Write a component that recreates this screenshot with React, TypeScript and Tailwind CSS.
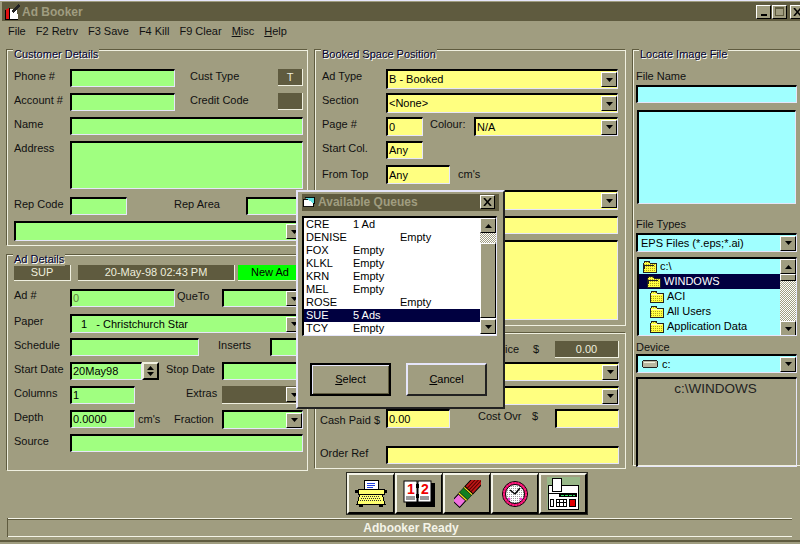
import React from 'react';

const raised = 'border border-t-white border-l-white border-r-black border-b-black';
const sunken = 'border-t-2 border-l-2 border-r border-b border-t-black border-l-black border-r-[#e6e6fa] border-b-[#e6e6fa]';
const green = 'bg-[#a0ff80]';
const yellow = 'bg-[#ffff80]';
const cyan = 'bg-[#a0ffff]';
const dither = 'bg-[repeating-conic-gradient(#ffffff_0_25%,#a09d80_0_50%)] bg-[length:2px_2px]';

function Group({ title, className, children }: { title: string; className: string; children: React.ReactNode }) {
  return (
    <div className={`relative box-border border border-[#f0f0e0] shadow-[-1px_-1px_0_#5f5b3f] ${className}`}>
      {title && (
        <span className="absolute -top-[4px] left-[5px] bg-[#a09d80] px-[1px] text-[11px] leading-[14px] text-[#000030] [text-shadow:1px_1px_0_#ffffff]">
          {title}
        </span>
      )}
      {children}
    </div>
  );
}

function Label({ className = '', children }: { className?: string; children?: React.ReactNode }) {
  return <span className={`shrink-0 whitespace-nowrap text-[11px] leading-[14px] text-[#111] ${className}`}>{children}</span>;
}

function Field({ className = '', children }: { className?: string; children?: React.ReactNode }) {
  return (
    <div className={`box-border flex shrink-0 items-center overflow-hidden whitespace-nowrap pl-[1px] text-[11px] text-black ${sunken} ${className}`}>
      {children}
    </div>
  );
}

function Arrow({ up = false }: { up?: boolean }) {
  return (
    <svg width="7" height="4" viewBox="0 0 7 4" className={up ? 'rotate-180' : ''}>
      <polygon points="0,0 7,0 3.5,4" fill="#000" />
    </svg>
  );
}

function DropBtn() {
  return (
    <div className={`ml-auto box-border flex h-[15px] w-[16px] shrink-0 items-center justify-center bg-[#a09d80] ${raised}`}>
      <Arrow />
    </div>
  );
}

function Combo({ className = '', children }: { className?: string; children?: React.ReactNode }) {
  return (
    <Field className={className}>
      <span className="min-w-0 flex-1 overflow-hidden">{children}</span>
      <DropBtn />
    </Field>
  );
}

function DarkBox({ className = '', children }: { className?: string; children?: React.ReactNode }) {
  return (
    <div className={`box-border flex shrink-0 items-center justify-center border-r border-b border-[#f0f0e0] bg-[#5f5b3f] text-[11px] text-[#eeeedd] ${className}`}>
      {children}
    </div>
  );
}

function AppIcon() {
  return (
    <svg width="17" height="16" viewBox="0 0 17 16" className="shrink-0" shapeRendering="crispEdges">
      <polygon points="1,6 5,4 5,15 1,15" fill="#e01010" />
      <polygon points="5,5 13,5 14,15 5,15" fill="#ffffff" />
      <polygon points="7,7 14,0 16,2 9,9" fill="#222" />
      <path d="M1 6V15H14M5 4V15" fill="none" stroke="#000" />
    </svg>
  );
}

function FolderIcon({ open = false }: { open?: boolean }) {
  return (
    <svg width="15" height="13" viewBox="0 0 15 13" className="shrink-0" shapeRendering="crispEdges">
      <defs>
        <pattern id="folderDots" width="2" height="2" patternUnits="userSpaceOnUse">
          <rect width="2" height="2" fill="#ffff40" />
          <rect width="1" height="1" fill="#b0a020" />
        </pattern>
      </defs>
      <path d="M1 3V12H14V3H8L7 1H3L2 3Z" fill="url(#folderDots)" stroke="#222" />
      {open ? <path d="M1 5H12M1 12L3 5" stroke="#222" fill="none" /> : <path d="M2 4H13" stroke="#fff8c0" />}
    </svg>
  );
}

function Typewriter() {
  return (
    <svg width="32" height="29" viewBox="0 0 32 29" shapeRendering="crispEdges">
      <rect x="9" y="1" width="14" height="11" fill="#fff" stroke="#000" />
      <path d="M12 4H20M12 6H20M12 8H18" stroke="#2040e0" />
      <rect x="3" y="10" width="26" height="5" fill="#ffff70" stroke="#000" />
      <rect x="0" y="11" width="3" height="3" fill="#000" />
      <rect x="29" y="11" width="3" height="3" fill="#000" />
      <polygon points="5,15 27,15 30,25 2,25" fill="#ffff70" stroke="#000" />
      <path d="M7 17H25M6 19H26M5 21H27" stroke="#333" strokeDasharray="1 1" />
      <rect x="4" y="26" width="4" height="2" fill="#000" />
      <rect x="24" y="26" width="4" height="2" fill="#000" />
    </svg>
  );
}

function Calendar() {
  return (
    <svg width="32" height="27" viewBox="0 0 32 27">
      <rect x="3" y="3" width="29" height="24" fill="#000" />
      <rect x="1" y="1" width="13" height="21" fill="#fff" stroke="#000" />
      <rect x="15" y="1" width="13" height="21" fill="#fff" stroke="#000" />
      <text x="4" y="14" fontSize="14" fontWeight="700" fontFamily="Liberation Sans" fill="#f00000">1</text>
      <text x="18" y="14" fontSize="14" fontWeight="700" fontFamily="Liberation Sans" fill="#f00000">2</text>
      <path d="M3 17H12M3 19H12M17 17H26M17 19H26" stroke="#333" />
      <rect x="13" y="4" width="3" height="4" fill="#000" />
      <rect x="13" y="14" width="3" height="4" fill="#000" />
    </svg>
  );
}

function Eraser() {
  return (
    <svg width="27" height="28" viewBox="0 0 27 28">
      <g transform="translate(2,24) rotate(-47)">
        <rect x="0" y="-5" width="9" height="10" fill="#f070e0" stroke="#000" />
        <rect x="9" y="-5.5" width="2" height="11" fill="#f0e020" stroke="#000" strokeWidth="0.5" />
        <rect x="11" y="-5.5" width="6" height="11" fill="#108020" stroke="#000" strokeWidth="0.5" />
        <rect x="17" y="-5.5" width="2" height="11" fill="#f0e020" stroke="#000" strokeWidth="0.5" />
        <rect x="19" y="-5.5" width="17" height="11" fill="#c01818" stroke="#000" />
        <path d="M19 -2.5H36M19 0H36M19 2.5H36" stroke="#500" />
      </g>
    </svg>
  );
}

function Clock() {
  return (
    <svg width="28" height="28" viewBox="0 0 28 28">
      <defs>
        <pattern id="clockDots" width="2" height="2" patternUnits="userSpaceOnUse">
          <rect width="2" height="2" fill="#fff" />
          <rect width="1" height="1" fill="#999" />
        </pattern>
      </defs>
      <circle cx="14" cy="14" r="12.5" fill="#e00060" stroke="#000" />
      <circle cx="14" cy="14" r="11" fill="none" stroke="#ff2080" strokeDasharray="2 1" strokeWidth="2" />
      <circle cx="14" cy="14" r="9.5" fill="url(#clockDots)" stroke="#000" />
      <path d="M14 14L19 8M14 14L9 10" stroke="#000" strokeWidth="1.5" />
      <circle cx="8" cy="19" r="1.5" fill="#f040d0" />
      <circle cx="20" cy="19" r="1.5" fill="#f040d0" />
    </svg>
  );
}

function Fax() {
  return (
    <svg width="33" height="33" viewBox="0 0 33 33" shapeRendering="crispEdges">
      <rect width="33" height="33" fill="#98b888" />
      <rect x="1" y="8" width="30" height="24" fill="#fff" stroke="#000" />
      <rect x="5" y="1" width="9" height="13" fill="#fff" stroke="#000" />
      <rect x="2" y="16" width="28" height="1" fill="#000" />
      <rect x="12" y="16" width="18" height="4" fill="#000" />
      <path d="M14 18H28" stroke="#30e060" strokeDasharray="3 1" />
      <rect x="3" y="22" width="3" height="7" fill="#fff" stroke="#000" />
      <rect x="9" y="22" width="10" height="7" fill="#fff" stroke="#000" />
      <path d="M12 22V29M16 22V29M9 25H19" stroke="#000" />
      <rect x="22" y="22" width="6" height="7" fill="#e00000" stroke="#000" />
    </svg>
  );
}

function ToolButton({ children }: { children: React.ReactNode }) {
  return (
    <div className="box-border flex h-[41px] w-[48px] items-center justify-center border-2 border-t-[#f4f4e8] border-l-[#f4f4e8] border-r-black border-b-black bg-[#a09d80] outline outline-1 -outline-offset-0 outline-[#2a2a20]">
      {children}
    </div>
  );
}

const queues = [
  ['CRE', '1 Ad', ''],
  ['DENISE', '', 'Empty'],
  ['FOX', 'Empty', ''],
  ['KLKL', 'Empty', ''],
  ['KRN', 'Empty', ''],
  ['MEL', 'Empty', ''],
  ['ROSE', '', 'Empty'],
  ['SUE', '5 Ads', ''],
  ['TCY', 'Empty', ''],
];

function QueueDialog() {
  return (
    <div className="absolute left-[296px] top-[189px] box-border flex h-[219px] w-[209px] flex-col border-2 border-t-[#e6e6fa] border-l-[#e6e6fa] border-r-[#222] border-b-[#222] bg-[#a09d80] px-[4px] pt-[2px]">
      <div className="flex h-[17px] shrink-0 items-center bg-[#5f5b3f] pb-[1px] pl-[1px] pr-[4px]">
        <svg width="12" height="12" viewBox="0 0 13 12" className="shrink-0" shapeRendering="crispEdges">
          <path d="M1 3V11H11V3Z" fill="#fff" stroke="#000" />
          <path d="M2 1H12V8" fill="#60e0e0" stroke="#000" />
        </svg>
        <span className="ml-[3px] text-[12px] font-bold text-[#a09d80]">Available Queues</span>
        <div className={`ml-auto box-border flex h-[14px] w-[15px] items-center justify-center bg-[#a09d80] ${raised}`}>
          <svg width="9" height="8" viewBox="0 0 9 8">
            <path d="M1 0L8 8M8 0L1 8" stroke="#000" strokeWidth="1.6" />
          </svg>
        </div>
      </div>
      <div className={`mt-[5px] box-border flex h-[120px] w-[195px] shrink-0 bg-white ${sunken}`}>
        <div className="flex w-[176px] shrink-0 flex-col">
          {queues.map(([name, a, b]) => (
            <div
              key={name}
              className={`flex h-[13px] shrink-0 items-center text-[11px] ${name === 'SUE' ? 'bg-[#000040] text-white' : 'text-black'}`}
            >
              <span className="w-[49px] shrink-0 pl-[2px]">{name}</span>
              <span className="w-[47px] shrink-0">{a}</span>
              <span>{b}</span>
            </div>
          ))}
        </div>
        <div className="flex w-[16px] shrink-0 flex-col">
          <div className={`box-border flex h-[15px] shrink-0 items-center justify-center bg-[#a09d80] ${raised}`}>
            <Arrow up />
          </div>
          <div className={`h-[10px] shrink-0 ${dither}`} />
          <div className={`box-border h-[75px] shrink-0 bg-[#a09d80] ${raised}`} />
          <div className={`box-border mt-[1px] flex h-[15px] shrink-0 items-center justify-center bg-[#a09d80] ${raised}`}>
            <Arrow />
          </div>
        </div>
      </div>
      <div className="mt-[27px] flex gap-[15px] pl-[8px]">
        <div className="box-border flex h-[33px] w-[81px] items-center justify-center border-2 border-black bg-[#a09d80] text-[11px] text-black shadow-[inset_1px_1px_0_#e6e6fa,inset_-1px_-1px_0_#5f5b3f]">
          <span><u>S</u>elect</span>
        </div>
        <div className="box-border flex h-[33px] w-[81px] items-center justify-center border-2 border-t-[#e6e6fa] border-l-[#e6e6fa] border-r-[#222] border-b-[#222] bg-[#a09d80] text-[11px] text-black">
          <span><u>C</u>ancel</span>
        </div>
      </div>
    </div>
  );
}

export default function App() {
  return (
    <div className="relative flex h-[544px] w-[800px] flex-col overflow-hidden border-t border-[#e6e6fa] bg-[#a09d80] font-['Liberation_Sans',Arial,sans-serif]">
      {/* title bar */}
      <div className="ml-[2px] mt-[1px] flex h-[19px] shrink-0 items-center bg-[#5f5b3f] pl-[2px]">
        <AppIcon />
        <span className="ml-[1px] text-[12px] font-bold text-[#a09d80]">Ad Booker</span>
        <div className="ml-auto flex h-[14px] items-center">
          <div className={`box-border flex h-[14px] w-[15px] items-end justify-center bg-[#a09d80] pb-[2px] ${raised}`}>
            <div className="h-[2px] w-[6px] bg-black" />
          </div>
          <div className={`box-border ml-[1px] flex h-[14px] w-[15px] items-center justify-center bg-[#a09d80] ${raised}`}>
            <div className="box-border h-[9px] w-[9px] border border-t-2 border-[#5f5b3f]" />
          </div>
          <div className={`box-border -mr-[5px] ml-[3px] flex h-[14px] w-[15px] items-center justify-center bg-[#a09d80] ${raised}`}>
            <svg width="9" height="8" viewBox="0 0 9 8">
              <path d="M1 0L8 8M8 0L1 8" stroke="#000" strokeWidth="1.6" />
            </svg>
          </div>
        </div>
      </div>

      {/* menu */}
      <div className="flex h-[29px] shrink-0 gap-[10px] pl-[8px] pt-[3px] text-[11px] leading-[14px] text-[#111]">
        <span>File</span>
        <span>F2 Retrv</span>
        <span>F3 Save</span>
        <span>F4 Kill</span>
        <span>F9 Clear</span>
        <span><u>M</u>isc</span>
        <span><u>H</u>elp</span>
      </div>

      <div className="flex h-[421px] shrink-0 pl-[7px]">
        {/* left column */}
        <div className="flex w-[301px] shrink-0 flex-col gap-[9px]">
          <Group title="Customer Details" className="h-[196px] pl-[6px] pt-[18px]">
            <div className="flex flex-col gap-[6px]">
              <div className="flex h-[18px]">
                <Label className="w-[56px]">Phone #</Label>
                <Field className={`w-[105px] ${green}`} />
                <Label className="ml-[15px] w-[88px]">Cust Type</Label>
                <DarkBox className="h-[17px] w-[25px]">T</DarkBox>
              </div>
              <div className="flex h-[18px]">
                <Label className="w-[56px]">Account #</Label>
                <Field className={`w-[105px] ${green}`} />
                <Label className="ml-[15px] w-[88px]">Credit Code</Label>
                <DarkBox className="h-[17px] w-[25px]" />
              </div>
              <div className="flex h-[18px]">
                <Label className="w-[56px]">Name</Label>
                <Field className={`w-[233px] ${green}`} />
              </div>
              <div className="flex h-[48px]">
                <Label className="w-[56px]">Address</Label>
                <Field className={`w-[233px] ${green}`} />
              </div>
              <div className="mt-[2px] flex h-[18px]">
                <Label className="w-[56px]">Rep Code</Label>
                <Field className={`w-[57px] ${green}`} />
                <Label className="ml-[47px] w-[72px]">Rep Area</Label>
                <Field className={`w-[57px] ${green}`} />
              </div>
              <Combo className={`h-[20px] w-[289px] ${green}`} />
            </div>
          </Group>

          <Group title="Ad Details" className="h-[216px] pl-[6px] pt-[9px]">
            <div className="flex flex-col gap-[6px]">
              <div className="mb-[2px] flex h-[16px] gap-[7px]">
                <DarkBox className="w-[57px]">SUP</DarkBox>
                <DarkBox className="w-[157px]">20-May-98 02:43 PM</DarkBox>
                <DarkBox className="-ml-[4px] w-[65px] !bg-[#00ff00] !text-black">New Ad</DarkBox>
              </div>
              <div className="flex h-[18px]">
                <Label className="w-[56px] -mt-[1px]">Ad #</Label>
                <Field className={`w-[105px] !text-[#608040] ${green}`}>0</Field>
                <Label className="ml-[2px] w-[45px]">QueTo</Label>
                <Combo className={`w-[81px] ${green}`} />
              </div>
              <div className="mt-[1px] flex h-[19px]">
                <Label className="w-[56px]">Paper</Label>
                <Combo className={`w-[233px] ${green}`}>
                  <span className="pl-[8px]">1&nbsp;&nbsp; - Christchurch Star</span>
                </Combo>
              </div>
              <div className="-mt-[1px] flex h-[18px]">
                <Label className="w-[56px]">Schedule</Label>
                <Field className={`w-[129px] ${green}`} />
                <Label className="ml-[19px] w-[52px]">Inserts</Label>
                <Field className={`w-[33px] ${green}`} />
              </div>
              <div className="flex h-[18px]">
                <Label className="w-[56px]">Start Date</Label>
                <Field className={`w-[72px] ${green}`}>20May98</Field>
                <div className="box-border flex w-[17px] shrink-0 flex-col items-center justify-center gap-[2px] border-2 border-t-[#f0f0e0] border-l-[#f0f0e0] border-r-black border-b-black bg-[#a09d80]">
                  <Arrow up />
                  <Arrow />
                </div>
                <Label className="ml-[7px] w-[56px]">Stop Date</Label>
                <Field className={`w-[81px] ${green}`} />
              </div>
              <div className="flex h-[18px]">
                <Label className="w-[56px]">Columns</Label>
                <Field className={`w-[65px] ${green}`}>1</Field>
                <Label className="ml-[51px] w-[36px]">Extras</Label>
                <div className="box-border flex w-[81px] shrink-0 items-center justify-end border-r border-b border-[#f0f0e0] bg-[#5f5b3f]">
                  <DropBtn />
                </div>
              </div>
              <div className="flex h-[18px]">
                <Label className="w-[56px]">Depth</Label>
                <Field className={`w-[65px] ${green}`}>0.0000</Field>
                <Label className="ml-[3px] w-[36px] pt-[2px]">cm's</Label>
                <Label className="w-[48px] pt-[2px]">Fraction</Label>
                <Combo className={`h-[19px] w-[81px] ${green}`} />
              </div>
              <div className="flex h-[18px]">
                <Label className="w-[56px]">Source</Label>
                <Field className={`w-[233px] ${green}`} />
              </div>
            </div>
          </Group>
        </div>

        {/* middle column */}
        <div className="ml-[7px] flex w-[311px] shrink-0 flex-col gap-[7px]">
          <Group title="Booked Space Position" className="h-[276px] pl-[6px] pt-[18px]">
            <div className="flex flex-col gap-[4px]">
              <div className="flex h-[20px]">
                <Label className="w-[64px]">Ad Type</Label>
                <Combo className={`w-[232px] ${yellow}`}>B - Booked</Combo>
              </div>
              <div className="flex h-[20px]">
                <Label className="w-[64px]">Section</Label>
                <Combo className={`w-[232px] ${yellow}`}>&lt;None&gt;</Combo>
              </div>
              <div className="flex h-[19px]">
                <Label className="w-[64px]">Page #</Label>
                <Field className={`w-[37px] ${yellow}`}>0</Field>
                <Label className="ml-[7px] w-[44px]">Colour:</Label>
                <Combo className={`w-[144px] ${yellow}`}>N/A</Combo>
              </div>
              <div className="mt-[1px] flex h-[18px]">
                <Label className="w-[64px]">Start Col.</Label>
                <Field className={`w-[37px] ${yellow}`}>Any</Field>
              </div>
              <div className="mt-[2px] flex h-[19px]">
                <Label className="w-[64px] pt-[2px]">From Top</Label>
                <Field className={`w-[64px] ${yellow}`}>Any</Field>
                <Label className="ml-[8px] pt-[2px]">cm's</Label>
              </div>
              <div className="mt-[2px] flex h-[20px]">
                <Label className="w-[64px]" />
                <Combo className={`w-[232px] ${yellow}`} />
              </div>
              <div className="mt-[2px] flex h-[18px]">
                <Label className="w-[64px]" />
                <Field className={`w-[232px] ${yellow}`} />
              </div>
              <div className="mt-[2px] flex h-[80px]">
                <Label className="w-[64px]" />
                <Field className={`w-[232px] ${yellow}`} />
              </div>
            </div>
          </Group>

          <Group title="" className="h-[136px] pl-[4px] pt-[7px]">
            <div className="flex flex-col">
              <div className="flex h-[17px] pl-[174px]">
                <Label className="w-[39px] pt-[1px]">Price</Label>
                <Label className="w-[22px] pt-[1px]">$</Label>
                <DarkBox className="w-[64px] border-0">0.00</DarkBox>
              </div>
              <div className="mt-[4px] flex h-[19px] pl-[66px]">
                <Combo className={`w-[233px] ${yellow}`} />
              </div>
              <div className="mt-[5px] flex h-[19px] pl-[66px]">
                <Combo className={`w-[233px] ${yellow}`} />
              </div>
              <div className="mt-[4px] flex h-[19px]">
                <Label className="w-[54px] pt-[4px]">Cash Paid</Label>
                <Label className="w-[12px] pt-[4px]">$</Label>
                <Field className={`w-[64px] ${yellow}`}>0.00</Field>
                <Label className="ml-[28px] w-[54px]">Cost Ovr</Label>
                <Label className="w-[23px]">$</Label>
                <Field className={`w-[64px] ${yellow}`} />
              </div>
              <div className="mt-[18px] flex h-[18px]">
                <Label className="w-[66px]">Order Ref</Label>
                <Field className={`w-[233px] ${yellow}`} />
              </div>
            </div>
          </Group>
        </div>

        {/* right column */}
        <div className="ml-[7px] w-[175px] shrink-0">
          <Group title="Locate Image File" className="h-[416px] w-[175px] pl-[2px]">
            <div className="flex flex-col">
              <Label className="mt-[18px]">File Name</Label>
              <Field className={`mt-[2px] h-[18px] w-[161px] ${cyan}`} />
              <Field className={`ml-[1px] mt-[7px] h-[94px] w-[159px] ${cyan}`} />
              <Label className="mt-[13px]">File Types</Label>
              <Combo className={`mt-[2px] h-[19px] w-[161px] ${cyan}`}>
                <span className="pl-[2px]">EPS Files (*.eps;*.ai)</span>
              </Combo>
              <div className={`ml-[1px] mt-[5px] box-border flex h-[79px] w-[160px] shrink-0 overflow-hidden ${cyan} ${sunken}`}>
                <div className="flex w-[141px] shrink-0 flex-col text-[11px] text-black">
                  <div className="flex h-[15px] shrink-0 items-center gap-[3px] pl-[3px]"><FolderIcon open />c:\</div>
                  <div className="flex h-[15px] shrink-0 items-center gap-[3px] bg-[#000040] pl-[7px] text-white"><FolderIcon open />WINDOWS</div>
                  <div className="flex h-[15px] shrink-0 items-center gap-[3px] pl-[10px]"><FolderIcon />ACI</div>
                  <div className="flex h-[15px] shrink-0 items-center gap-[3px] pl-[10px]"><FolderIcon />All Users</div>
                  <div className="flex h-[15px] shrink-0 items-center gap-[3px] pl-[10px]"><FolderIcon />Application Data</div>
                  <div className="flex h-[15px] shrink-0 items-center pl-[10px]"><FolderIcon /></div>
                </div>
                <div className="flex w-[16px] shrink-0 flex-col">
                  <div className={`box-border flex h-[15px] shrink-0 items-center justify-center bg-[#a09d80] ${raised}`}>
                    <Arrow up />
                  </div>
                  <div className={`box-border h-[7px] shrink-0 bg-[#a09d80] ${raised}`} />
                  <div className={`h-[40px] shrink-0 ${dither}`} />
                  <div className={`box-border flex h-[15px] shrink-0 items-center justify-center bg-[#a09d80] ${raised}`}>
                    <Arrow />
                  </div>
                </div>
              </div>
              <Label className="mt-[4px]">Device</Label>
              <Combo className={`h-[19px] w-[161px] ${cyan}`}>
                <span className="flex items-center gap-[4px] pl-[3px]">
                  <svg width="16" height="10" viewBox="0 0 16 10" className="shrink-0" shapeRendering="crispEdges">
                    <rect x="0.5" y="1.5" width="15" height="7" rx="2" fill="#b8b8a0" stroke="#222" />
                    <path d="M2 3H13" stroke="#f0f0e0" />
                  </svg>
                  c:
                </span>
              </Combo>
              <Field className="mt-[4px] h-[90px] w-[161px] !items-start justify-center pr-[4px] !text-[13.5px] !text-[#222]">
                c:\WINDOWS
              </Field>
            </div>
          </Group>
        </div>
      </div>

      {/* toolbar */}
      <div className="ml-[347px] mt-[2px] flex h-[41px] shrink-0 gap-0">
        <ToolButton><Typewriter /></ToolButton>
        <ToolButton><Calendar /></ToolButton>
        <ToolButton><Eraser /></ToolButton>
        <ToolButton><Clock /></ToolButton>
        <ToolButton><Fax /></ToolButton>
      </div>

      {/* status bar */}
      <div className="mx-[8px] mt-[4px] flex h-[19px] shrink-0 items-center justify-center border-y border-t-[#f4f4e8] border-b-[#f4f4e8] pl-[22px] pt-[1px] text-[12px] font-bold text-[#f4f4e8] shadow-[-1px_0_0_#5f5b3f,inset_0_1px_0_#5f5b3f]">
        Adbooker Ready
      </div>
      <div className="mt-[3px] h-[2px] shrink-0 bg-[#5f5b3f]" />

      <QueueDialog />
    </div>
  );
}
